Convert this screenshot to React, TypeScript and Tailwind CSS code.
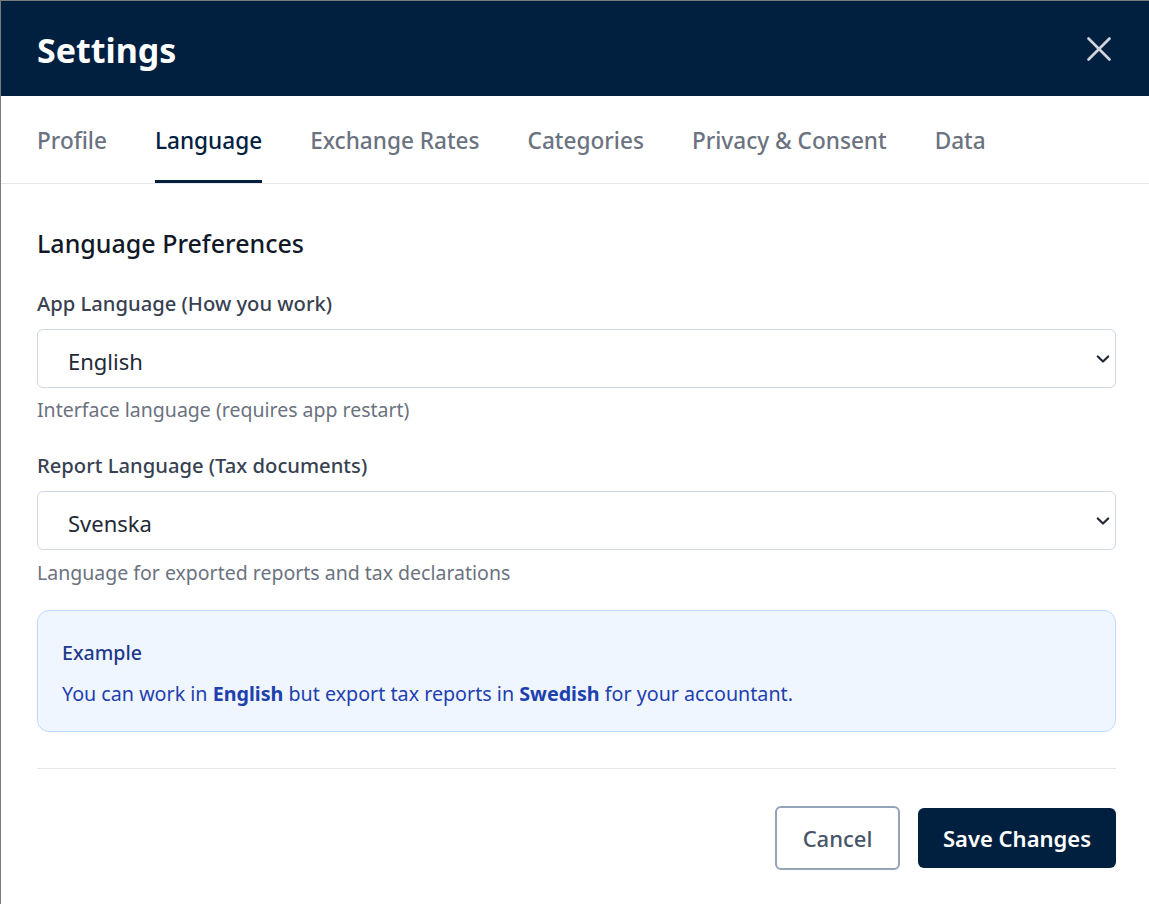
import { X } from "lucide-react";

const tabs = ["Profile", "Language", "Exchange Rates", "Categories", "Privacy & Consent", "Data"];

function Chevron() {
  return (
    <svg
      className="pointer-events-none absolute right-[6px] top-1/2 -translate-y-1/2"
      width="14"
      height="14"
      viewBox="0 0 14 14"
      fill="none"
    >
      <path d="M1.8 4.5L7 9.5l5.2-5" stroke="#1f2937" strokeWidth="2.2" strokeLinecap="round" strokeLinejoin="round" />
    </svg>
  );
}

function LangSelect({ value, options }: { value: string; options: string[] }) {
  return (
    <div className="relative mt-3">
      <select
        defaultValue={value}
        className="block h-[59px] w-full appearance-none rounded-md border border-[#cfd8e3] bg-white pl-[30px] pr-10 pt-[5px] text-[22px] text-[#1f2937] outline-none"
      >
        {options.map((o) => (
          <option key={o}>{o}</option>
        ))}
      </select>
      <Chevron />
    </div>
  );
}

export default function App() {
  return (
    <div
      className="h-screen w-screen overflow-hidden bg-[#7a7a7a] pl-px pt-px"
      style={{ fontFamily: '"Noto Sans", "Open Sans", sans-serif' }}
    >
      <div className="h-full w-[1151px] bg-white">
        <header className="flex h-[95px] items-center justify-between bg-[#012040] pl-9 pr-[32px]">
          <h1 className="pt-[3px] text-[34px] font-bold leading-none text-white">Settings</h1>
          <button className="text-[#d1d5db]">
            <X size={42} strokeWidth={1.5} />
          </button>
        </header>

        <nav className="flex h-[88px] gap-12 border-b border-[#e5e7eb] px-9">
          {tabs.map((t) => (
            <div
              key={t}
              className={
                t === "Language"
                  ? "flex items-center border-b-[3px] border-[#012040] pt-[5px] text-[22.6px] font-medium text-[#012040]"
                  : "flex items-center border-b-[3px] border-transparent pt-[5px] text-[22.6px] font-medium text-[#6b7280]"
              }
            >
              {t}
            </div>
          ))}
        </nav>

        <main className="px-9 pt-[43px]">
          <h2 className="text-[25px] font-medium leading-8 text-[#111827]">Language Preferences</h2>

          <label className="mt-[30px] block text-[20.2px] font-medium leading-7 text-[#374151]">
            App Language (How you work)
          </label>
          <LangSelect value="English" options={["English", "Svenska"]} />
          <p className="mt-[9px] text-[19.5px] leading-[26px] text-[#6b7280]">Interface language (requires app restart)</p>

          <label className="mt-[28px] block text-[20.2px] font-medium leading-7 text-[#374151]">
            Report Language (Tax documents)
          </label>
          <LangSelect value="Svenska" options={["English", "Svenska"]} />
          <p className="mt-[10px] text-[19.5px] leading-[26px] text-[#6b7280]">Language for exported reports and tax declarations</p>

          <div className="mt-6 h-[122px] rounded-xl border border-[#bfdbfe] bg-[#eff6ff] px-6 pt-[28px]">
            <div className="text-[19.6px] font-medium leading-7 text-[#1e3a8a]">Example</div>
            <p className="mt-[13px] text-[19.7px] leading-7 text-[#1e40af]">
              You can work in <strong className="font-bold text-[#1e40af]">English</strong> but export tax reports in{" "}
              <strong className="font-bold text-[#1e40af]">Swedish</strong> for your accountant.
            </p>
          </div>

          <div className="mt-9 border-t border-[#e5e7eb]" />

          <div className="mt-[37px] flex items-center justify-end gap-[18px]">
            <button className="h-16 w-[125px] rounded-md border-2 border-[#94a3b8] bg-white text-[22px] font-medium text-[#475569]">
              Cancel
            </button>
            <button className="h-[60px] w-[198px] rounded-md bg-[#012040] text-[22px] font-semibold text-white">
              Save Changes
            </button>
          </div>
        </main>
      </div>
    </div>
  );
}
